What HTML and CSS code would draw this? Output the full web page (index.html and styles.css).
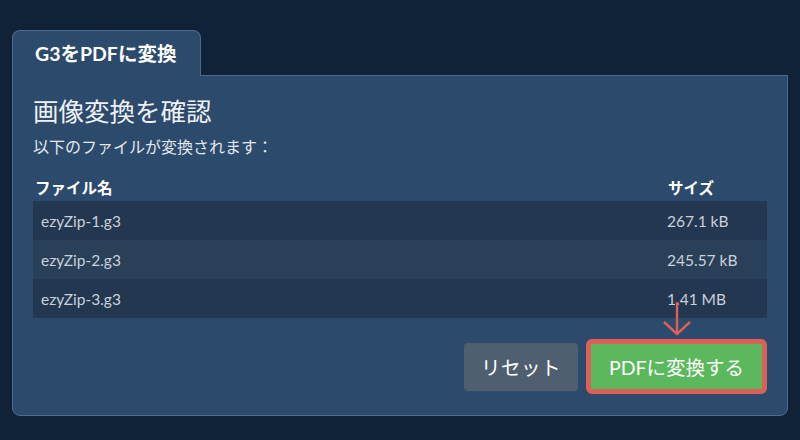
FILE: index.html
```html
<!DOCTYPE html>
<html lang="ja">
<head>
<meta charset="utf-8">
<title>G3をPDFに変換</title>
<link rel="stylesheet" href="styles.css">
</head>
<body>
<div class="wrap">
  <div class="tab">G3をPDFに変換</div>
  <div class="panel">
    <h1 class="title">画像変換を確認</h1>
    <p class="subtitle">以下のファイルが変換されます：</p>
    <table class="files">
      <thead>
        <tr><th class="c-name">ファイル名</th><th class="c-size">サイズ</th></tr>
      </thead>
      <tbody>
        <tr><td class="c-name">ezyZip-1.g3</td><td class="c-size">267.1 kB</td></tr>
        <tr><td class="c-name">ezyZip-2.g3</td><td class="c-size">245.57 kB</td></tr>
        <tr><td class="c-name">ezyZip-3.g3</td><td class="c-size">1.41 MB</td></tr>
      </tbody>
    </table>
    <div class="actions">
      <button class="btn btn-reset">リセット</button>
      <div class="convert-wrap">
        <svg class="arrow" width="32" height="36" viewBox="0 0 32 36" aria-hidden="true">
          <path d="M16 1 V33 M3 21 L16 33 L29 21" fill="none" stroke="#dc5f58" stroke-width="2.4"/>
        </svg>
        <button class="btn btn-convert">PDFに変換する</button>
      </div>
    </div>
  </div>
</div>
</body>
</html>
```
FILE: styles.css
```css
html, body {
  margin: 0;
  padding: 0;
  background: #0f2238;
  font-family: "Lato", "Noto Sans CJK JP", sans-serif;
  color: #e9edf2;
}

.wrap {
  padding: 30px 12px 0 12px;
  width: 776px;
}

.tab {
  width: 189px;
  height: 46px;
  box-sizing: border-box;
  background: #2c4a6b;
  border: 1px solid #4c6a8b;
  border-bottom: none;
  border-radius: 8px 8px 0 0;
  font-weight: 700;
  font-size: 19.5px;
  line-height: 46px;
  padding-left: 22px;
  color: #ffffff;
  position: relative;
  z-index: 1;
  margin-bottom: -1px;
}

.panel {
  background: #2c4a6b;
  border: 1px solid #4c6a8b;
  border-radius: 0 0 8px 8px;
  padding: 20px 20px 21px 20px;
}

.title {
  margin: 0;
  font-size: 25.5px;
  line-height: 30px;
  font-weight: 400;
  color: #eef1f4;
}

.subtitle {
  margin: 11px 0 0 0;
  font-size: 16px;
  line-height: 20px;
  color: #e3e8ee;
}

.files {
  margin-top: 18px;
  width: 734px;
  border-collapse: collapse;
}

.files th {
  text-align: left;
  font-weight: 700;
  font-size: 15.5px;
  line-height: 26px;
  height: 26px;
  padding: 0 2px;
  color: #ffffff;
}

.files td {
  height: 39px;
  padding: 0 8px;
  font-size: 15.5px;
  color: #c9d1db;
}

.files .c-size {
  width: 92px;
  padding-left: 6px;
}

.files th.c-size {
  padding-left: 7px;
}

.files tbody tr:nth-child(odd) {
  background: #243750;
}

.files tbody tr:nth-child(even) {
  background: #2a4058;
}

.actions {
  margin-top: 21px;
  display: flex;
  justify-content: flex-end;
  align-items: center;
  gap: 8px;
}

.btn {
  font-family: "Lato", "Noto Sans CJK JP", sans-serif;
  font-size: 19.5px;
  color: #ffffff;
  border: none;
  cursor: pointer;
}

.btn-reset {
  width: 114px;
  height: 48px;
  background: #4f5f70;
  border-radius: 4px;
  letter-spacing: 0.5px;
  padding: 0;
}

.convert-wrap {
  position: relative;
}

.arrow {
  position: absolute;
  left: 75px;
  top: -38px;
}

.btn-convert {
  display: block;
  width: 181px;
  height: 55px;
  box-sizing: border-box;
  background: #5cb85c;
  border: 5px solid #dc5f58;
  border-radius: 6px;
  padding: 0;
}
```
